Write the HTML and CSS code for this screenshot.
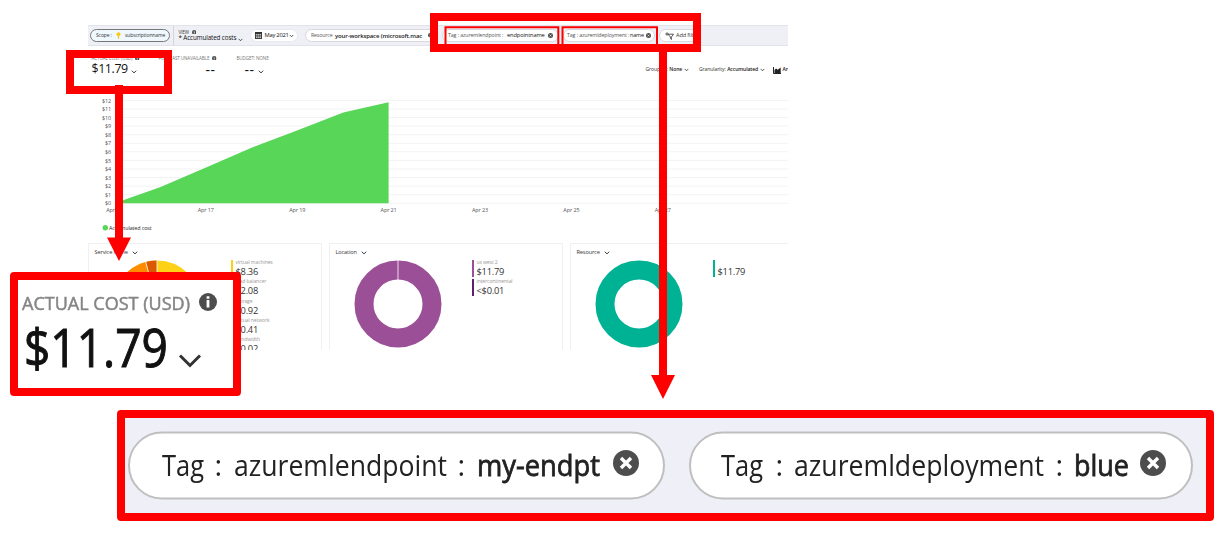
FILE: index.html
```html
<!DOCTYPE html>
<html lang="en">
<head>
<meta charset="utf-8">
<title>Cost analysis</title>
<link rel="stylesheet" href="styles.css">
</head>
<body>
<svg class="defs" aria-hidden="true">
  <symbol id="chev" viewBox="0 0 6 4"><path d="M.8.7 3 2.9 5.2.7" fill="none" stroke="#333" stroke-width="1"/></symbol>
  <symbol id="info" viewBox="0 0 18 18"><circle cx="9" cy="9" r="9" fill="#4d4d4d"/><path d="M9 3.2v2.6M9 7v7.6" stroke="#fff" stroke-width="2.8"/></symbol>
  <symbol id="close" viewBox="0 0 26 26"><circle cx="13" cy="13" r="13" fill="#4d4d4d"/><path d="m8 8 10 10M18 8 8 18" stroke="#fff" stroke-width="3.4"/></symbol>
</svg>

<main class="dashboard">
  <header class="toolbar">
    <div class="scope-zone">
      <div class="pill scope"><span class="scope-label">Scope :</span>
        <svg class="key" viewBox="0 0 5 8"><circle cx="2.5" cy="2.5" r="2.3" fill="#fcc91c"/><path d="M2.5 3v4.8" stroke="#fcc91c" stroke-width="1.4"/></svg>
        <span>subscriptionname</span></div>
    </div>
    <div class="view">
      <div class="view-label">VIEW <svg class="i-info"><use href="#info"/></svg></div>
      <div class="view-name"><span>* Accumulated costs</span><svg class="chev"><use href="#chev"/></svg></div>
    </div>
    <div class="pill date">
      <svg class="calendar" viewBox="0 0 8 8"><path d="M0 0h8v8H0z" fill="#333"/><path d="M1 3h6M1 4.7h6M1 6.4h6" stroke="#fff" stroke-width=".9"/><path d="M2.8 2.5v5M5.2 2.5v5" stroke="#333" stroke-width=".5"/></svg>
      <span>May 2021</span><svg class="chev"><use href="#chev"/></svg>
    </div>
    <div class="pill resource"><span class="soft">Resource</span><b>your-workspace (microsoft.mac</b><svg class="i-info"><use href="#info"/></svg></div>
    <div class="pill tag tag-endpoint"><span class="soft">Tag : azuremlendpoint :</span><span class="tag-value">endpointname</span><svg class="i-close"><use href="#close"/></svg></div>
    <div class="pill tag tag-deployment"><span class="soft">Tag : azuremldeployment :</span><span class="tag-value">name</span><svg class="i-close"><use href="#close"/></svg></div>
    <div class="pill add"><svg class="funnel" viewBox="0 0 9 8"><path d="M3 2.2h5.5L6.4 5v2.5l-1-1V5zM2 .3v3.4M.3 2h3.4" fill="none" stroke="#333" stroke-width=".8"/></svg><span>Add filter</span></div>
  </header>

  <section class="summary">
    <div class="kpi cost"><div class="kpi-label">ACTUAL COST (USD)<svg class="i-info"><use href="#info"/></svg></div><div class="kpi-value">$11.79<svg class="chev"><use href="#chev"/></svg></div></div>
    <div class="kpi forecast"><div class="kpi-label">FORECAST UNAVAILABLE<svg class="i-info"><use href="#info"/></svg></div><div class="kpi-value">--</div></div>
    <div class="kpi budget"><div class="kpi-label">BUDGET: NONE</div><div class="kpi-value">--<svg class="chev"><use href="#chev"/></svg></div></div>
    <div class="options">
      <div class="option group">Group by: <b>None</b><svg class="chev"><use href="#chev"/></svg></div>
      <div class="option gran">Granularity: <b>Accumulated</b><svg class="chev"><use href="#chev"/></svg></div>
      <div class="option area"><svg class="areaicon" viewBox="0 0 8 7"><path d="M.5 0v6.5H8" fill="none" stroke="#222"/><path d="M1.5 6V3L3 1.5l1.7 1.3L7.7.5V6z" fill="#222"/></svg><b>Area</b></div>
    </div>
  </section>

  <svg class="chart" viewBox="88 94 700 149">
    <path class="grid" d="M118 100.4h670M118 109h670M118 117.5h670M118 126.1h670M118 134.7h670M118 143.3h670M118 151.8h670M118 160.4h670M118 169h670M118 177.6h670M118 186.2h670M118 194.7h670M118 203.3h670"/>
    <path class="cost-area" d="M117 203.3V202L123 200.2 160 187.3 206 167.4 251.5 147.8 297 130.5 343.3 112.6 388.6 102.3V203.3z"/>
    <g class="axis y-axis">
      <text x="111" y="102.5">$12</text><text x="111" y="111.1">$11</text><text x="111" y="119.6">$10</text><text x="111" y="128.2">$9</text><text x="111" y="136.8">$8</text><text x="111" y="145.4">$7</text><text x="111" y="153.9">$6</text><text x="111" y="162.5">$5</text><text x="111" y="171.1">$4</text><text x="111" y="179.7">$3</text><text x="111" y="188.2">$2</text><text x="111" y="196.8">$1</text><text x="111" y="205.4">$0</text>
    </g>
    <g class="axis x-axis">
      <text x="114.3" y="212">Apr 15</text><text x="205.8" y="212">Apr 17</text><text x="297.2" y="212">Apr 19</text><text x="388.6" y="212">Apr 21</text><text x="480" y="212">Apr 23</text><text x="571.4" y="212">Apr 25</text><text x="662.8" y="212">Apr 27</text>
    </g>
    <circle cx="105.3" cy="227.8" r="2.7" fill="#57d657"/>
    <text class="legend-text" x="109" y="229.7" textLength="42.5" lengthAdjust="spacingAndGlyphs">Accumulated cost</text>
  </svg>

  <section class="cards">
    <article class="card">
      <h2>Service name<svg class="chev"><use href="#chev"/></svg></h2>
      <div class="card-body">
        <svg class="donut" viewBox="-44 -44 88 88"><circle r="34" stroke="#fdd116"/><path d="M-9 -32.8A34 34 0 0 0 -12 31.8" stroke="#ff8c00"/><path d="M-8.8 -32.84A34 34 0 0 1 0 -34" stroke="#dc5800"/><path d="M0-44v20M-11.6-43.3-6.3-23.5" class="gap"/></svg>
        <ul>
          <li class="yellow"><small>virtual machines</small><span>$8.36</span></li>
          <li class="orange"><small>load balancer</small><span>$2.08</span></li>
          <li class="orange"><small>storage</small><span>$0.92</span></li>
          <li class="orange"><small>virtual network</small><span>$0.41</span></li>
          <li class="orange"><small>bandwidth</small><span>$0.02</span></li>
        </ul>
      </div>
    </article>
    <article class="card">
      <h2>Location<svg class="chev"><use href="#chev"/></svg></h2>
      <div class="card-body">
        <svg class="donut" viewBox="-44 -44 88 88"><circle r="34" stroke="#9b4f96"/><path d="M0-44v20" class="gap"/></svg>
        <ul>
          <li class="purple"><small>us west 2</small><span>$11.79</span></li>
          <li class="violet"><small>intercontinental</small><span>&lt;$0.01</span></li>
        </ul>
      </div>
    </article>
    <article class="card">
      <h2>Resource<svg class="chev"><use href="#chev"/></svg></h2>
      <div class="card-body">
        <svg class="donut" viewBox="-44 -44 88 88"><circle r="34" stroke="#00b294"/></svg>
        <ul>
          <li class="teal"><small>&nbsp;</small><span>$11.79</span></li>
        </ul>
      </div>
    </article>
  </section>
</main>

<svg class="annotations" viewBox="0 0 1227 534">
  <g fill="none" stroke="#f00">
    <path d="M445.5 27.2H558.3V48H445.5zM562.5 27.2H657V48H562.5z" stroke-width="2"/>
    <path d="M434 17H697V48H434zM70 54H168V90H70z" stroke-width="8"/>
    <path d="M119 85V238M663 50V376" stroke-width="8"/>
  </g>
  <path d="M107 237.5H131L119 261zM651 375H675L663 399z" fill="#f00"/>

  <g class="callout">
    <rect x="14" y="276" width="223" height="116" fill="#fff"/>
    <g class="magnified">
      <text class="c-label" x="22" y="309.5" textLength="168" lengthAdjust="spacingAndGlyphs">ACTUAL COST (USD)</text>
      <use href="#info" x="199" y="293" width="18" height="18"/>
      <text class="c-value" x="24" y="367" textLength="144" lengthAdjust="spacingAndGlyphs">$11.79</text>
      <path d="m180 355.5 10 10 10-10" fill="none" stroke="#333" stroke-width="3"/>
    </g>
  </g>

  <g class="callout">
    <rect x="121" y="414" width="1089" height="103" fill="#eff0f7"/>
    <g class="magnified">
      <rect class="c-pill" x="129" y="432.5" width="535" height="66" rx="33"/>
      <rect class="c-pill" x="690" y="432.5" width="502" height="66" rx="33"/>
      <text class="c-tag" x="162" y="476" textLength="42" lengthAdjust="spacingAndGlyphs">Tag</text>
      <text class="c-tag" x="214.5" y="476">:</text>
      <text class="c-tag" x="234" y="476" textLength="213" lengthAdjust="spacingAndGlyphs">azuremlendpoint</text>
      <text class="c-tag" x="457.5" y="476">:</text>
      <text class="c-tag c-strong" x="477" y="476" textLength="123" lengthAdjust="spacingAndGlyphs">my-endpt</text>
      <use href="#close" x="613" y="450" width="26" height="26"/>
      <text class="c-tag" x="721" y="476" textLength="42" lengthAdjust="spacingAndGlyphs">Tag</text>
      <text class="c-tag" x="775.5" y="476">:</text>
      <text class="c-tag" x="794" y="476" textLength="250" lengthAdjust="spacingAndGlyphs">azuremldeployment</text>
      <text class="c-tag" x="1055.5" y="476">:</text>
      <text class="c-tag c-strong" x="1074" y="476" textLength="55" lengthAdjust="spacingAndGlyphs">blue</text>
      <use href="#close" x="1140" y="450" width="26" height="26"/>
    </g>
  </g>
</svg>
</body>
</html>
```
FILE: styles.css
```css
* { box-sizing: border-box; }
body { margin: 0; padding: 25px 0 0 88px; height: 534px; overflow: hidden; background: #fff; color: #333; font-family: "Open Sans", "Noto Sans", sans-serif; font-size: 5px; line-height: 1; }
.defs { position: absolute; width: 0; height: 0; }
svg { flex: none; }
b { font-weight: 600; color: #222; }

.dashboard { width: 700px; height: 325px; overflow: hidden; letter-spacing: -.12px; }
.chev { width: 6px; height: 4px; }
.i-info { width: 4.5px; height: 4.5px; }
.i-close { width: 5px; height: 5px; }
.soft { color: #555; }

.toolbar { display: flex; align-items: center; width: 700px; height: 21px; background: #eff0f6; border: solid #e2e3ea; border-width: 1px 0; white-space: nowrap; }
.toolbar > * { flex: none; }
.pill { display: flex; align-items: center; height: 13px; border: 1px solid #d8d8dd; border-radius: 7px; background: #fff; }
.scope-zone { width: 86px; height: 19px; padding: 3px 0 0 2px; border-right: 1px solid #d4d5da; }
.scope { width: 80px; padding-left: 5px; background: #eef8fe; border-color: #777; font-size: 5px; }
.scope-label { width: 20px; }
.key { width: 5px; height: 7px; margin-right: 4px; }
.view { width: 76px; padding-left: 4.5px; }
.view-label { display: flex; align-items: center; gap: 3px; font-size: 4.6px; height: 6px; }
.view-name { display: flex; align-items: center; font-size: 6.3px; height: 7px; color: #111; }
.view-name span { width: 59px; }
.view-name .chev { width: 5px; margin-top: 2px; }
.date { width: 48px; padding-left: 4px; font-size: 5.8px; letter-spacing: -.25px; color: #111; border-color: #e8e8ee; }
.calendar { width: 7px; height: 7px; margin-right: 2.5px; }
.date span { width: 24.5px; }
.date .chev { width: 5px; }
.resource { width: 131px; margin-left: 7px; padding-left: 5px; font-size: 5.6px; }
.resource .soft { width: 24px; font-size: 5.2px; }
.resource b { width: 93px; font-size: 6px; letter-spacing: -.15px; }
.tag-endpoint { width: 117px; margin-left: 6px; padding-left: 5px; font-size: 5.3px; }
.tag-endpoint .soft { width: 59px; }
.tag-endpoint .tag-value { width: 40.5px; }
.tag-value { color: #111; font-size: 5.7px; }
.tag-deployment { width: 92px; margin-left: 4px; padding-left: 3px; font-size: 5.3px; }
.tag-deployment .soft { width: 63px; }
.tag-deployment .tag-value { width: 15.5px; font-size: 5.4px; }
.add { width: 42px; margin-left: 4px; padding-left: 5px; font-size: 5.6px; }
.funnel { width: 9px; height: 8px; margin-right: 2px; }

.summary { display: flex; height: 48px; padding: 9px 0 0 3.5px; white-space: nowrap; }
.kpi { flex: none; }
.kpi-label { display: flex; align-items: center; height: 6px; gap: 3px; font-size: 4.6px; color: #777; }
.kpi-value { display: flex; align-items: center; height: 16px; gap: 3px; margin-top: .5px; font-size: 12.4px; font-weight: 500; letter-spacing: -.4px; color: #111; }
.kpi-value .chev { margin-top: 5px; }
.cost { width: 67px; }
.forecast { width: 78px; }
.forecast .kpi-value { padding-left: 47px; }
.budget .kpi-value { padding-left: 8px; }
.forecast .kpi-value, .budget .kpi-value { font-size: 14px; letter-spacing: .6px; }
.budget { width: 92px; }
.options { display: flex; padding: 12px 0 0 317px; height: 22px; }
.option { display: flex; align-items: center; flex: none; gap: 1.5px; height: 6px; font-size: 5.1px; }
.option .chev { width: 5px; }
.group { width: 53.5px; }
.gran { width: 74px; }
.areaicon { width: 8px; height: 7px; margin-right: 0; }

.chart { display: block; width: 700px; height: 149px; }
.grid { stroke: #f3f3f3; stroke-width: 1; }
.cost-area { fill: #57d657; }
.axis text { font-size: 5.5px; fill: #555; }
.y-axis { text-anchor: end; }
.x-axis { text-anchor: middle; }
.legend-text { font-size: 5.8px; fill: #222; }

.cards { display: flex; gap: 7px; }
.card { flex: none; width: 234px; height: 120px; border: 1px solid #f0f0f0; }
.card h2 { display: flex; align-items: center; gap: 4px; height: 10px; margin: 4px 0 0 5.5px; font-size: 5.6px; font-weight: 400; }
.card-body { display: flex; }
.donut { width: 88px; height: 88px; margin: 2px 0 0 24px; }
.donut circle, .donut path { fill: none; stroke-width: 19; }
.donut .gap { stroke: #fff; stroke-width: .8; }
.card ul { margin: 2px 0 0 30px; padding: 0; list-style: none; }
.card li { height: 17px; margin-bottom: 2.3px; padding-left: 2.5px; border-left-width: 2px; border-left-style: solid; white-space: nowrap; }
.card li small { display: block; height: 6px; font-size: 5.1px; color: #999; }
.card li span { display: block; font-size: 9.3px; line-height: 11px; letter-spacing: -.25px; color: #333; }
.yellow { border-color: #fdd116; }
.orange { border-color: #ff8c00; }
.purple { border-color: #9b4f96; }
.violet { border-color: #5c1f73; }
.teal { border-color: #00b294; }

.annotations { position: absolute; left: 0; top: 0; width: 1227px; height: 534px; }
.callout > rect { stroke: #f00; stroke-width: 8; stroke-linejoin: round; }
.magnified { filter: blur(.6px); }
.c-label { font-size: 19px; fill: #858585; stroke: #858585; stroke-width: .5; }
.c-value { font-size: 53px; fill: #111; stroke: #111; stroke-width: 1; }
.c-pill { fill: #fff; stroke: #bfbfbf; stroke-width: 2; }
.c-tag { font-size: 29px; fill: #222; }
.c-strong { stroke: #222; stroke-width: .8; }
```
